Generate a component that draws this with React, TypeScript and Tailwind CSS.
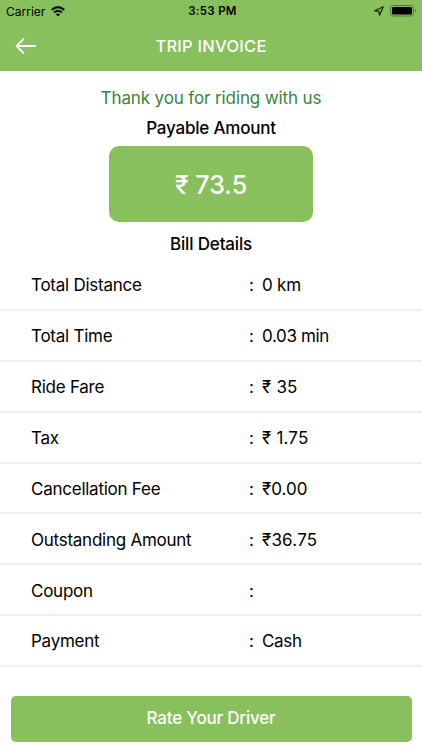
const rows: [string, string, string][] = [
  ['Total Distance', '0 km', 'tracking-[-0.2px]'],
  ['Total Time', '0.03 min', 'tracking-[-0.35px]'],
  ['Ride Fare', '₹ 35', 'tracking-[0.2px]'],
  ['Tax', '₹ 1.75', 'tracking-[0.2px]'],
  ['Cancellation Fee', '₹0.00', ''],
  ['Outstanding Amount', '₹36.75', 'tracking-[0.2px]'],
  ['Coupon', '', ''],
  ['Payment', 'Cash', 'tracking-[-0.3px]'],
];

export default function App() {
  return (
    <div className="flex h-[750px] w-[422px] flex-col overflow-hidden bg-white font-['Inter',sans-serif] text-[17px] text-black">
      <header className="h-[71px] shrink-0 bg-[#88c05d]">
        <div className="grid h-[22px] grid-cols-3 items-center px-[6px] text-[12px]">
          <div className="flex items-center gap-[6px] pt-[1px]">
            <span>Carrier</span>
            <svg width="14" height="11" viewBox="0 0 14 11" fill="none" stroke="#111" strokeWidth="2">
              <path d="M.700 4Q7-1.700 13.300 4M3 6.600Q7 3.200 11 6.600" />
              <path d="M4.800 8.300Q7 6.500 9.200 8.300L7 10.500Z" fill="#111" stroke="none" />
            </svg>
          </div>
          <span className="pt-[1px] pl-[3px] text-center text-[11.5px] font-semibold tracking-[0.3px]">3:53 PM</span>
          <div className="flex items-center justify-end gap-[6px]">
            <svg width="10" height="10" viewBox="0 0 10 10" fill="none" stroke="#16220e" strokeWidth="1.250" strokeLinejoin="round">
              <path d="M9.200 .800L.800 4.800L4.800 5.400L5.500 9.200Z" />
            </svg>
            <svg width="26" height="12" viewBox="0 0 26 12">
              <rect x=".5" y=".5" width="23" height="10.500" rx="2.600" fill="none" stroke="#55783a" />
              <rect x="2" y="2" width="20" height="7.500" rx="1.300" fill="#000" />
              <path d="M24.800 4Q26 4.500 26 5.750T24.800 7.500Z" fill="#55783a" />
            </svg>
          </div>
        </div>
        <div className="grid h-[48px] grid-cols-3 items-center px-[15px] text-white">
          <svg width="22" height="18" viewBox="0 0 22 18" fill="none" stroke="white" strokeWidth="1.800" strokeLinecap="round" strokeLinejoin="round">
            <path d="M20 9H1.500M8.500 2L1.500 9L8.500 16" />
          </svg>
          <h1 className="justify-self-center text-[16.5px] font-medium tracking-[0.250px] whitespace-nowrap">TRIP INVOICE</h1>
        </div>
      </header>
      <main className="flex flex-col items-center">
        <p className="mt-[16px] h-[22px] leading-[22px] tracking-[-0.120px] text-[#34863a]">Thank you for riding with us</p>
        <h2 className="mt-[8px] h-[22px] leading-[22px] font-medium tracking-[-0.2px]">Payable Amount</h2>
        <div className="mt-[7px] flex h-[76px] w-[204px] items-center justify-center rounded-[10px] bg-[#88c05d] pt-[3px] text-[25px] font-medium text-white">₹ 73.5</div>
        <h2 className="mt-[11px] h-[22px] leading-[22px] font-medium tracking-[-0.150px]">Bill Details</h2>
        <dl className="mt-[5px] w-full">
          {rows.map(([label, value, valueStyle]) => (
            <div key={label} className="flex h-[50.9px] items-center border-b-2 border-[#eeeff4] pt-[3px] pl-[31px]">
              <dt className="w-[218px] tracking-[-0.250px]">{label}</dt>
              <dd className="flex"><span className="w-[13px]">:</span><span className={valueStyle}>{value}</span></dd>
            </div>
          ))}
        </dl>
      </main>
      <button className="mx-[10.500px] mt-auto mb-[8.500px] h-[46px] shrink-0 rounded-[5px] bg-[#88c05d] pt-[1px] font-medium tracking-[-0.2px] text-white">Rate Your Driver</button>
    </div>
  );
}
